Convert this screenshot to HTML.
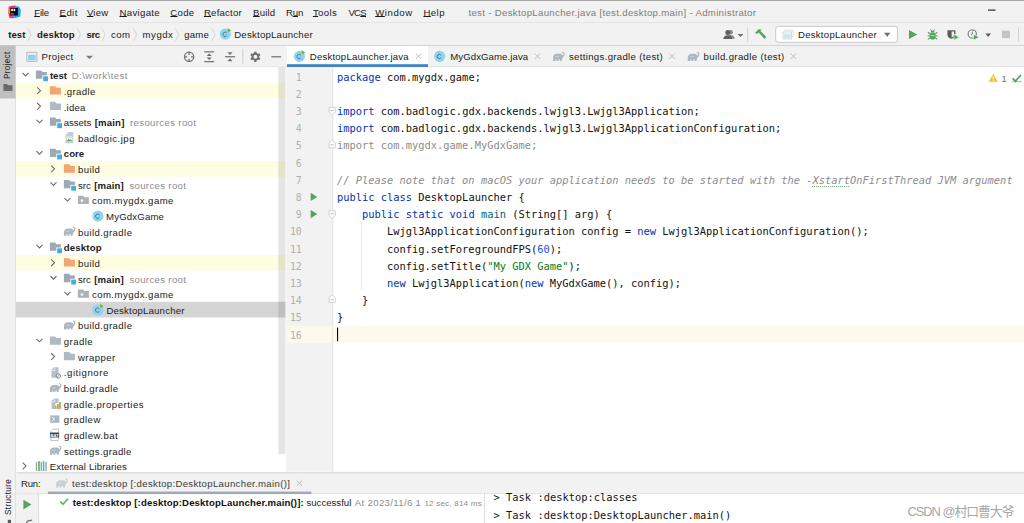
<!DOCTYPE html>
<html><head><meta charset="utf-8"><title>test - DesktopLauncher.java</title>
<style>
html,body{margin:0;padding:0;}
body{width:1024px;height:523px;position:relative;overflow:hidden;background:#f2f2f2;}
u{text-decoration-thickness:0.8px;text-underline-offset:0.2px}
svg{display:block;overflow:visible}
</style></head><body>
<svg width="1024" height="523" viewBox="0 0 1024 523" style="position:absolute;left:0;top:0">
<rect x="0" y="0" width="1024" height="523" fill="#f2f2f2" />
<rect x="0" y="0" width="1024" height="1" fill="#a8a8a8" />
<rect x="0" y="22" width="1024" height="1" fill="#e4e4e4" />
<rect x="0" y="45" width="1024" height="1" fill="#d4d4d4" />
<g transform="translate(7.9 5.3)"><path d="M0.8 1.2L7.2 0l1 6.5-6.6 6.2-1.2-4.5z" fill="#fb2e7e"/><path d="M0 4.8l3-1.8v6l-2.7-0.8z" fill="#fd8c28"/><path d="M7 0.5l4.2 1 1.7 3-0.6 6.7-5.5 1.7-2-4z" fill="#1ba5f6"/><path d="M1 12.4l4-2.4 1.6 2.6-3 0.3z" fill="#fb2e7e"/><rect x="2.4" y="2.6" width="7.6" height="7.6" fill="#0c0510"/><rect x="3.3" y="3.5" width="1.7" height="2.3" fill="#fff"/><rect x="5.6" y="3.5" width="1.7" height="2.3" fill="#fff"/><rect x="3.3" y="8.3" width="2.7" height="0.7" fill="#fff"/></g>
<rect x="988" y="9.5" width="7.5" height="1.2" fill="#2a2a2a" />
<g transform="translate(27.3 28.2)"><path d="M0.5 0.3l3.2 6.2-3.2 6.2" fill="none" stroke="#cdcdcd" stroke-width="0.8"/></g>
<g transform="translate(77 28.2)"><path d="M0.5 0.3l3.2 6.2-3.2 6.2" fill="none" stroke="#cdcdcd" stroke-width="0.8"/></g>
<g transform="translate(101.5 28.2)"><path d="M0.5 0.3l3.2 6.2-3.2 6.2" fill="none" stroke="#cdcdcd" stroke-width="0.8"/></g>
<g transform="translate(133 28.2)"><path d="M0.5 0.3l3.2 6.2-3.2 6.2" fill="none" stroke="#cdcdcd" stroke-width="0.8"/></g>
<g transform="translate(175 28.2)"><path d="M0.5 0.3l3.2 6.2-3.2 6.2" fill="none" stroke="#cdcdcd" stroke-width="0.8"/></g>
<g transform="translate(211.3 28.2)"><path d="M0.5 0.3l3.2 6.2-3.2 6.2" fill="none" stroke="#cdcdcd" stroke-width="0.8"/></g>
<g transform="translate(219.8 28.6)"><circle cx="5.55" cy="5.55" r="5.55" fill="#8fd3ef"/><path d="M6.95 4.45A2.15 2.15 0 1 0 6.95 6.95" fill="none" stroke="#4b7b93" stroke-width="1"/><path d="M7.7 -0.8l3.8 2.6-3.8 2.5z" fill="#5cb848" stroke="#fff" stroke-opacity="0.6" stroke-width="0.4"/></g>
<g transform="translate(723 29.5)"><circle cx="7.6" cy="2.8" r="2.3" fill="#8a8a8a"/><path d="M3.6 9.2c0-2.4 1.6-3.6 4-3.6s4 1.2 4 3.6z" fill="#8a8a8a"/><circle cx="4.8" cy="3" r="2.5" fill="#5f5f5f"/><path d="M0.4 9.6c0-2.6 1.8-3.8 4.4-3.8s4.4 1.2 4.4 3.8z" fill="#5f5f5f"/></g>
<g transform="translate(737.5 34)"><path d="M0 0h6l-3 3z" fill="#6e6e6e"/></g>
<rect x="747.2" y="27.5" width="1" height="14.5" fill="#d0d0d0" />
<g transform="translate(754 28.5)"><path d="M1 4.2L5 0.6l2.6 0.6-1.2 1.2 6 6.2-1.8 1.8-6-6.4-1.6 1.6z" fill="#56a35f"/></g>
<rect x="775.7" y="26.4" width="121.8" height="16" rx="2.5" fill="#fff" stroke="#c4c4c4" stroke-width="0.9"/>
<g transform="translate(782.5 29.5)"><rect x="2.6" y="0.5" width="8" height="6.4" fill="#fafbfc" stroke="#d5dbe0" stroke-width="0.8"/><rect x="0.5" y="2.4" width="8.6" height="7" fill="#f4f6f8" stroke="#cdd5db" stroke-width="0.8"/><rect x="1.6" y="4.6" width="6.4" height="3.8" fill="#c9e6f6"/></g>
<g transform="translate(884 32.8)"><path d="M0 0h6.4l-3.2 4z" fill="#6e6e6e"/></g>
<g transform="translate(909 29.9)"><path d="M0 0l8.2 4.6-8.2 4.6z" fill="#55a35f"/></g>
<g transform="translate(927.6 29)"><path d="M3 0.3l1.2 1.9M7 0.3L5.8 2.2" stroke="#55a35f" stroke-width="0.9" fill="none"/><path d="M2.9 3.4a2.1 2 0 0 1 4.2 0z" fill="#55a35f"/><rect x="2" y="3.6" width="6" height="6.9" rx="2.8" fill="#55a35f"/><path d="M0.3 3.2l2 1.5M9.7 3.2l-2 1.5M0 6.8h2.2M10 6.8H7.8M0.3 10.4l2-1.6M9.7 10.4l-2-1.6" stroke="#55a35f" stroke-width="1.1"/><path d="M3.3 6.6h3.4" stroke="#d8ead9" stroke-width="0.8"/></g>
<g transform="translate(947.2 29.9)"><path d="M0.2 0.3h8v4.5c0 2-1.5 3.3-4 4.1C1.7 8.1 0.2 6.8 0.2 4.8z" fill="#5c5c5c"/><path d="M4.4 1.5h2.5v3.2c0 1.2-0.9 2.2-2.5 2.9z" fill="#ececec"/><path d="M6.6 4.3l5.6 3-5.6 3z" fill="#55a35f" stroke="#f2f2f2" stroke-width="0.7"/></g>
<g transform="translate(967.6 29.3)"><circle cx="4.65" cy="4.7" r="4.1" fill="none" stroke="#6e6e6e" stroke-width="1"/><path d="M4.9 2.2l-0.4 2.8-1.2 1" fill="none" stroke="#6e6e6e" stroke-width="0.9"/><path d="M5.8 4.9l5.8 3-5.8 3z" fill="#55a35f" stroke="#f2f2f2" stroke-width="0.7"/></g>
<g transform="translate(985.4 33.6)"><path d="M0 0h5.6l-2.8 3.4z" fill="#5a5a5a"/></g>
<rect x="1002" y="30.7" width="8" height="7.4" fill="#c4c4c4" />
<rect x="1018" y="27.3" width="1" height="14" fill="#d0d0d0" />
<rect x="0" y="46" width="15.5" height="477" fill="#f2f2f2" />
<rect x="15.2" y="46" width="0.8" height="477" fill="#dcdcdc" />
<rect x="0" y="45.5" width="15.5" height="53" fill="#bfbfbf" />
<g transform="translate(3.4 84)"><path d="M0 0h3.6l1 1.2h4.4v5.8h-9z" fill="#6a6a6a"/></g>
<rect x="16.5" y="46" width="270" height="21" fill="#f2f2f2" />
<rect x="16.5" y="66.5" width="270" height="1" fill="#dddddd" />
<rect x="16" y="67.2" width="270.5" height="406" fill="#ffffff" />
<g transform="translate(26.4 51.8)"><rect x="0.5" y="0.5" width="10" height="9" fill="#eef1f3" stroke="#aab4bb" stroke-width="0.9"/><rect x="1.8" y="3" width="7.4" height="5.4" fill="#8fd0ee"/></g>
<g transform="translate(86 55.7)"><path d="M0 0h7l-3.5 3.4z" fill="#7a7a7a"/></g>
<g transform="translate(183.4 51.1)"><circle cx="5.7" cy="5.7" r="4.6" fill="none" stroke="#757575" stroke-width="1.3"/><path d="M5.7 0.6v3.2M5.7 7.6v3.2M0.6 5.7h3.2M7.6 5.7h3.2" stroke="#757575" stroke-width="1.3"/></g>
<g transform="translate(204.2 51.2)"><path d="M0 0.6h10M0 10.4h10" stroke="#757575" stroke-width="1.3"/><path d="M5 2.2l2.6 2.6h-5.2zM5 8.8l2.6-2.6h-5.2z" fill="#6e6e6e"/></g>
<g transform="translate(225 51.2)"><path d="M0 5.5h10" stroke="#757575" stroke-width="1.3"/><path d="M5 3.8l2.6-2.8h-5.2zM5 7.2l2.6 2.8h-5.2z" fill="#6e6e6e"/></g>
<rect x="242.3" y="48.8" width="1" height="14.8" fill="#d0d0d0" />
<g transform="translate(250.2 51.6)"><g transform="translate(5.2 5.2)"><g fill="#6e6e6e"><rect x="-1.1" y="-5.2" width="2.2" height="3" transform="rotate(0)"/><rect x="-1.1" y="-5.2" width="2.2" height="3" transform="rotate(60)"/><rect x="-1.1" y="-5.2" width="2.2" height="3" transform="rotate(120)"/><rect x="-1.1" y="-5.2" width="2.2" height="3" transform="rotate(180)"/><rect x="-1.1" y="-5.2" width="2.2" height="3" transform="rotate(240)"/><rect x="-1.1" y="-5.2" width="2.2" height="3" transform="rotate(300)"/></g><circle r="3" fill="none" stroke="#6e6e6e" stroke-width="1.9"/></g></g>
<rect x="271.3" y="56.2" width="9.8" height="1.2" fill="#6e6e6e" />
<rect x="16" y="82.84" width="269.5" height="15.64" fill="#fefde1" />
<rect x="16" y="161.04000000000002" width="269.5" height="15.64" fill="#fefde1" />
<rect x="16" y="254.88" width="269.5" height="15.64" fill="#fefde1" />
<rect x="16" y="301.8" width="269.5" height="15.64" fill="#d5d5d5" />
<rect x="278.3" y="67.2" width="7.2" height="387" fill="#000" fill-opacity="0.1"/>
<g transform="translate(21.5 71.72000000000001)"><path d="M1 1.2l3 3 3-3" fill="none" stroke="#6a6a6a" stroke-width="1.1"/></g>
<g transform="translate(35.9 70.52000000000001)"><path d="M0 0h5.2l1.5 1.6h4.3v6.7h-11z" fill="#9fa9b3"/><rect x="6.4" y="4.9" width="6" height="6" fill="#fff"/><rect x="7.3" y="5.8" width="4.8" height="4.9" fill="#3fb0e2"/></g>
<g transform="translate(36.0 86.66)"><path d="M1.2 0.7l3.3 3.3-3.3 3.3" fill="none" stroke="#6a6a6a" stroke-width="1.1"/></g>
<g transform="translate(49.9 86.16)"><path d="M0 0h5.2l1.5 1.6h4.3v6.7h-11z" fill="#f3a673"/></g>
<g transform="translate(36.0 102.30000000000001)"><path d="M1.2 0.7l3.3 3.3-3.3 3.3" fill="none" stroke="#6a6a6a" stroke-width="1.1"/></g>
<g transform="translate(49.9 101.80000000000001)"><path d="M0 0h5.2l1.5 1.6h4.3v6.7h-11z" fill="#b0bac2"/></g>
<g transform="translate(35.5 118.64)"><path d="M1 1.2l3 3 3-3" fill="none" stroke="#6a6a6a" stroke-width="1.1"/></g>
<g transform="translate(49.9 117.44)"><path d="M0 0h5.2l1.5 1.6h4.3v6.7h-11z" fill="#9fa9b3"/><rect x="6.4" y="4.9" width="6" height="6" fill="#fff"/><rect x="7.3" y="5.8" width="4.8" height="4.9" fill="#3fb0e2"/></g>
<g transform="translate(65.5 131.98)"><path d="M2.6 0h5.2v11.2h-7.8V2.6z" fill="#c5cdd3"/><path d="M0 2.6L2.6 0v2.6z" fill="#e3e7ea"/><rect x="1.2" y="4.2" width="5.4" height="4.8" fill="#fff"/><path d="M1.2 9l1.9-2.6 1.4 1.5 0.9-0.8 1.2 1.9z" fill="#62b543"/><rect x="1.2" y="4.2" width="5.4" height="1.6" fill="#bfe0f3"/></g>
<g transform="translate(35.5 149.92)"><path d="M1 1.2l3 3 3-3" fill="none" stroke="#6a6a6a" stroke-width="1.1"/></g>
<g transform="translate(49.9 148.72)"><path d="M0 0h5.2l1.5 1.6h4.3v6.7h-11z" fill="#9fa9b3"/><rect x="6.4" y="4.9" width="6" height="6" fill="#fff"/><rect x="7.3" y="5.8" width="4.8" height="4.9" fill="#3fb0e2"/></g>
<g transform="translate(50.0 164.86)"><path d="M1.2 0.7l3.3 3.3-3.3 3.3" fill="none" stroke="#6a6a6a" stroke-width="1.1"/></g>
<g transform="translate(63.9 164.36)"><path d="M0 0h5.2l1.5 1.6h4.3v6.7h-11z" fill="#f3a673"/></g>
<g transform="translate(49.5 181.2)"><path d="M1 1.2l3 3 3-3" fill="none" stroke="#6a6a6a" stroke-width="1.1"/></g>
<g transform="translate(63.9 180.0)"><path d="M0 0h5.2l1.5 1.6h4.3v6.7h-11z" fill="#9fa9b3"/><rect x="6.4" y="4.9" width="6" height="6" fill="#fff"/><rect x="7.3" y="5.8" width="4.8" height="4.9" fill="#3fb0e2"/></g>
<g transform="translate(63.5 196.83999999999997)"><path d="M1 1.2l3 3 3-3" fill="none" stroke="#6a6a6a" stroke-width="1.1"/></g>
<g transform="translate(77.89999999999999 195.64)"><path d="M0 0h5.2l1.5 1.6h4.3v6.7h-11z" fill="#a9b3bc"/><circle cx="4.1" cy="5" r="1.35" fill="#f3f5f6"/></g>
<g transform="translate(92.39999999999999 210.57999999999998)"><circle cx="5.55" cy="5.55" r="5.55" fill="#8fd3ef"/><path d="M6.95 4.45A2.15 2.15 0 1 0 6.95 6.95" fill="none" stroke="#4b7b93" stroke-width="1"/></g>
<g transform="translate(63.699999999999996 226.72000000000003)"><path d="M0.2 9V5.6C0.2 3.2 2 1.8 4.4 1.8H7C8.4 1.8 9.2 2.6 9.6 3.6C10.2 3.4 10.6 2.8 10.6 2C10.6 1.2 10 0.9 9.4 1.1L9 0.3C10.4-0.3 11.8 0.5 11.8 2C11.8 3.8 10.8 5 9.8 5.4V6C9.8 6.6 9.5 7 9 7.2V9H7V7.6H5.6V9H3.6V7.6H2.6V9Z" fill="#acb7c0"/><path d="M2.6 4.4c1 0.8 2.4 0.8 3.4 0" fill="none" stroke="#dfe4e8" stroke-width="0.6"/></g>
<g transform="translate(35.5 243.76)"><path d="M1 1.2l3 3 3-3" fill="none" stroke="#6a6a6a" stroke-width="1.1"/></g>
<g transform="translate(49.9 242.56)"><path d="M0 0h5.2l1.5 1.6h4.3v6.7h-11z" fill="#9fa9b3"/><rect x="6.4" y="4.9" width="6" height="6" fill="#fff"/><rect x="7.3" y="5.8" width="4.8" height="4.9" fill="#3fb0e2"/></g>
<g transform="translate(50.0 258.7)"><path d="M1.2 0.7l3.3 3.3-3.3 3.3" fill="none" stroke="#6a6a6a" stroke-width="1.1"/></g>
<g transform="translate(63.9 258.2)"><path d="M0 0h5.2l1.5 1.6h4.3v6.7h-11z" fill="#f3a673"/></g>
<g transform="translate(49.5 275.03999999999996)"><path d="M1 1.2l3 3 3-3" fill="none" stroke="#6a6a6a" stroke-width="1.1"/></g>
<g transform="translate(63.9 273.84)"><path d="M0 0h5.2l1.5 1.6h4.3v6.7h-11z" fill="#9fa9b3"/><rect x="6.4" y="4.9" width="6" height="6" fill="#fff"/><rect x="7.3" y="5.8" width="4.8" height="4.9" fill="#3fb0e2"/></g>
<g transform="translate(63.5 290.68)"><path d="M1 1.2l3 3 3-3" fill="none" stroke="#6a6a6a" stroke-width="1.1"/></g>
<g transform="translate(77.89999999999999 289.48)"><path d="M0 0h5.2l1.5 1.6h4.3v6.7h-11z" fill="#a9b3bc"/><circle cx="4.1" cy="5" r="1.35" fill="#f3f5f6"/></g>
<g transform="translate(92.39999999999999 304.42)"><circle cx="5.55" cy="5.55" r="5.55" fill="#8fd3ef"/><path d="M6.95 4.45A2.15 2.15 0 1 0 6.95 6.95" fill="none" stroke="#4b7b93" stroke-width="1"/><path d="M7.7 -0.8l3.8 2.6-3.8 2.5z" fill="#5cb848" stroke="#fff" stroke-opacity="0.6" stroke-width="0.4"/></g>
<g transform="translate(63.699999999999996 320.56)"><path d="M0.2 9V5.6C0.2 3.2 2 1.8 4.4 1.8H7C8.4 1.8 9.2 2.6 9.6 3.6C10.2 3.4 10.6 2.8 10.6 2C10.6 1.2 10 0.9 9.4 1.1L9 0.3C10.4-0.3 11.8 0.5 11.8 2C11.8 3.8 10.8 5 9.8 5.4V6C9.8 6.6 9.5 7 9 7.2V9H7V7.6H5.6V9H3.6V7.6H2.6V9Z" fill="#acb7c0"/><path d="M2.6 4.4c1 0.8 2.4 0.8 3.4 0" fill="none" stroke="#dfe4e8" stroke-width="0.6"/></g>
<g transform="translate(35.5 337.59999999999997)"><path d="M1 1.2l3 3 3-3" fill="none" stroke="#6a6a6a" stroke-width="1.1"/></g>
<g transform="translate(49.9 336.4)"><path d="M0 0h5.2l1.5 1.6h4.3v6.7h-11z" fill="#b0bac2"/></g>
<g transform="translate(50.0 352.53999999999996)"><path d="M1.2 0.7l3.3 3.3-3.3 3.3" fill="none" stroke="#6a6a6a" stroke-width="1.1"/></g>
<g transform="translate(63.9 352.03999999999996)"><path d="M0 0h5.2l1.5 1.6h4.3v6.7h-11z" fill="#b0bac2"/></g>
<g transform="translate(51.5 367.18)"><path d="M2.6 0h4.4v10.5h-7V2.6z" fill="#b5bfc6"/><path d="M3.3 0.6v2.7h-2.7" fill="none" stroke="#fff" stroke-width="0.7"/><circle cx="6.8" cy="8.8" r="2.2" fill="#fff" stroke="#6a6a6a" stroke-width="0.8"/><path d="M5.5 10.2l2.7-2.8" stroke="#6a6a6a" stroke-width="0.7"/></g>
<g transform="translate(49.699999999999996 383.12)"><path d="M0.2 9V5.6C0.2 3.2 2 1.8 4.4 1.8H7C8.4 1.8 9.2 2.6 9.6 3.6C10.2 3.4 10.6 2.8 10.6 2C10.6 1.2 10 0.9 9.4 1.1L9 0.3C10.4-0.3 11.8 0.5 11.8 2C11.8 3.8 10.8 5 9.8 5.4V6C9.8 6.6 9.5 7 9 7.2V9H7V7.6H5.6V9H3.6V7.6H2.6V9Z" fill="#acb7c0"/><path d="M2.6 4.4c1 0.8 2.4 0.8 3.4 0" fill="none" stroke="#dfe4e8" stroke-width="0.6"/></g>
<g transform="translate(51.5 398.46)"><path d="M2.6 0h4.4v4.6h-3v5.9h-4V2.6z" fill="#b5bfc6"/><path d="M3.3 0.6v2.7h-2.7" fill="none" stroke="#fff" stroke-width="0.7"/><rect x="3.6" y="7.2" width="1.5" height="3.3" fill="#f29b3a"/><rect x="5.6" y="5.6" width="1.5" height="4.9" fill="#f2762e"/><rect x="7.7" y="3.6" width="1.5" height="6.9" fill="#62b543"/></g>
<g transform="translate(50.199999999999996 415.40000000000003)"><rect width="9.2" height="7.4" fill="#aeb8c0"/><path d="M2 1.8l2.2 1.9-2.2 1.9" fill="none" stroke="#fff" stroke-width="1"/></g>
<g transform="translate(50.1 428.74)"><path d="M3 0.4h5.3v11.4h-7.5V2.6z" fill="#fff" stroke="#aeb8c0" stroke-width="0.8"/><rect x="0" y="3.8" width="9" height="4.9" fill="#3c4347"/><text x="0.5" y="7.9" font-family="Liberation Sans, sans-serif" font-size="4.3" font-weight="bold" fill="#fff" textLength="8" lengthAdjust="spacingAndGlyphs">BAT</text></g>
<g transform="translate(49.699999999999996 445.68)"><path d="M0.2 9V5.6C0.2 3.2 2 1.8 4.4 1.8H7C8.4 1.8 9.2 2.6 9.6 3.6C10.2 3.4 10.6 2.8 10.6 2C10.6 1.2 10 0.9 9.4 1.1L9 0.3C10.4-0.3 11.8 0.5 11.8 2C11.8 3.8 10.8 5 9.8 5.4V6C9.8 6.6 9.5 7 9 7.2V9H7V7.6H5.6V9H3.6V7.6H2.6V9Z" fill="#acb7c0"/><path d="M2.6 4.4c1 0.8 2.4 0.8 3.4 0" fill="none" stroke="#dfe4e8" stroke-width="0.6"/></g>
<g transform="translate(21.5 462.02)"><path d="M1.2 0.7l3.3 3.3-3.3 3.3" fill="none" stroke="#6a6a6a" stroke-width="1.1"/></g>
<g transform="translate(35.800000000000004 461.02)"><rect x="0" y="1" width="1.4" height="9" fill="#9aa7b0"/><rect x="2.4" y="0" width="1.6" height="10" fill="#62b543"/><rect x="4.8" y="1" width="1.4" height="9" fill="#9aa7b0"/><rect x="7" y="0" width="1.6" height="10" fill="#40b6e0"/><rect x="9.6" y="1" width="1.4" height="9" fill="#9aa7b0"/></g>
<rect x="286.5" y="46" width="738" height="21" fill="#f2f2f2" />
<rect x="286.5" y="66.5" width="738" height="0.8" fill="#d4d4d4" />
<rect x="287" y="46" width="141" height="19" fill="#ffffff" />
<rect x="287" y="64.2" width="141" height="2.9" fill="#4083c9" />
<rect x="287" y="67.2" width="737.5" height="404.5" fill="#ffffff" />
<rect x="286.6" y="67.2" width="45.9" height="404.5" fill="#f2f2f2" />
<rect x="332.4" y="67.2" width="0.8" height="404.5" fill="#dcdcdc" />
<g transform="translate(293.9 50.8)"><circle cx="5.55" cy="5.55" r="5.55" fill="#8fd3ef"/><path d="M6.95 4.45A2.15 2.15 0 1 0 6.95 6.95" fill="none" stroke="#4b7b93" stroke-width="1"/><path d="M7.7 -0.8l3.8 2.6-3.8 2.5z" fill="#5cb848" stroke="#fff" stroke-opacity="0.6" stroke-width="0.4"/></g>
<g transform="translate(415.1 52.8)"><path d="M0.8 0.8l5.4 5.4M6.2 0.8L0.8 6.2" stroke="#b4b4b4" stroke-width="0.9"/></g>
<g transform="translate(434.1 50.8)"><circle cx="5.55" cy="5.55" r="5.55" fill="#8fd3ef"/><path d="M6.95 4.45A2.15 2.15 0 1 0 6.95 6.95" fill="none" stroke="#4b7b93" stroke-width="1"/></g>
<g transform="translate(534.0 52.8)"><path d="M0.8 0.8l5.4 5.4M6.2 0.8L0.8 6.2" stroke="#b4b4b4" stroke-width="0.9"/></g>
<g transform="translate(552.8 51.9)"><path d="M0.2 9V5.6C0.2 3.2 2 1.8 4.4 1.8H7C8.4 1.8 9.2 2.6 9.6 3.6C10.2 3.4 10.6 2.8 10.6 2C10.6 1.2 10 0.9 9.4 1.1L9 0.3C10.4-0.3 11.8 0.5 11.8 2C11.8 3.8 10.8 5 9.8 5.4V6C9.8 6.6 9.5 7 9 7.2V9H7V7.6H5.6V9H3.6V7.6H2.6V9Z" fill="#acb7c0"/><path d="M2.6 4.4c1 0.8 2.4 0.8 3.4 0" fill="none" stroke="#dfe4e8" stroke-width="0.6"/></g>
<g transform="translate(668.5 52.8)"><path d="M0.8 0.8l5.4 5.4M6.2 0.8L0.8 6.2" stroke="#b4b4b4" stroke-width="0.9"/></g>
<g transform="translate(687.6 51.9)"><path d="M0.2 9V5.6C0.2 3.2 2 1.8 4.4 1.8H7C8.4 1.8 9.2 2.6 9.6 3.6C10.2 3.4 10.6 2.8 10.6 2C10.6 1.2 10 0.9 9.4 1.1L9 0.3C10.4-0.3 11.8 0.5 11.8 2C11.8 3.8 10.8 5 9.8 5.4V6C9.8 6.6 9.5 7 9 7.2V9H7V7.6H5.6V9H3.6V7.6H2.6V9Z" fill="#acb7c0"/><path d="M2.6 4.4c1 0.8 2.4 0.8 3.4 0" fill="none" stroke="#dfe4e8" stroke-width="0.6"/></g>
<g transform="translate(789.9 52.8)"><path d="M0.8 0.8l5.4 5.4M6.2 0.8L0.8 6.2" stroke="#b4b4b4" stroke-width="0.9"/></g>
<rect x="287" y="325.8" width="737.5" height="16.9" fill="#fcfaed" />
<rect x="332.4" y="325.8" width="0.8" height="16.9" fill="#e6e3d3" />
<rect x="337" y="327.6" width="1.1" height="13.6" fill="#000" />
<g transform="translate(310.7 192.8)"><path d="M0 0l6.6 4.1-6.6 4.1z" fill="#55a35f"/></g>
<g transform="translate(310.7 210.0)"><path d="M0 0l6.6 4.1-6.6 4.1z" fill="#55a35f"/></g>
<g transform="translate(328.7 107.1)"><path d="M0.4 0.4h6.2v5l-3.1 2.8-3.1-2.8z" fill="#fff" stroke="#c8c8c8" stroke-width="0.8"/><path d="M2 3.4h3" stroke="#a0a0a0" stroke-width="0.8"/></g>
<g transform="translate(328.7 139.7)"><path d="M0.4 8.2h6.2v-5l-3.1-2.8-3.1 2.8z" fill="#fff" stroke="#c8c8c8" stroke-width="0.8"/><path d="M2 5.2h3" stroke="#a0a0a0" stroke-width="0.8"/></g>
<g transform="translate(328.7 210.29999999999998)"><path d="M0.4 0.4h6.2v5l-3.1 2.8-3.1-2.8z" fill="#fff" stroke="#c8c8c8" stroke-width="0.8"/><path d="M2 3.4h3" stroke="#a0a0a0" stroke-width="0.8"/></g>
<g transform="translate(328.7 294.5)"><path d="M0.4 8.2h6.2v-5l-3.1-2.8-3.1 2.8z" fill="#fff" stroke="#c8c8c8" stroke-width="0.8"/><path d="M2 5.2h3" stroke="#a0a0a0" stroke-width="0.8"/></g>
<rect x="361.3" y="222.5" width="0.8" height="68" fill="#e2e2e2" />
<g transform="translate(988.6 74)"><path d="M4.6 0l4.6 7.8h-9.2z" fill="#f2bf2f"/><path d="M4.6 2.6v2.8M4.6 6v0.9" stroke="#fff" stroke-width="1"/></g>
<g transform="translate(1011.6 74.2)"><path d="M1 4.2l2.8 2.6 5.6-6" fill="none" stroke="#4f9d55" stroke-width="1.6"/><path d="M0.6 8l1.6-1 1.6 1 1.6-1 1.6 1 1.6-1 1.6 1" fill="none" stroke="#4f9d55" stroke-width="0.7"/></g>
<rect x="16.5" y="471.8" width="1008" height="52" fill="#f2f2f2" />
<rect x="16.5" y="472.3" width="1008" height="1" fill="#d4d4d4" />
<rect x="16.5" y="493.4" width="1008" height="0.8" fill="#dedede" />
<g transform="translate(56 478.4)"><path d="M0.2 9V5.6C0.2 3.2 2 1.8 4.4 1.8H7C8.4 1.8 9.2 2.6 9.6 3.6C10.2 3.4 10.6 2.8 10.6 2C10.6 1.2 10 0.9 9.4 1.1L9 0.3C10.4-0.3 11.8 0.5 11.8 2C11.8 3.8 10.8 5 9.8 5.4V6C9.8 6.6 9.5 7 9 7.2V9H7V7.6H5.6V9H3.6V7.6H2.6V9Z" fill="#c8cfd4"/><path d="M2.6 4.4c1 0.8 2.4 0.8 3.4 0" fill="none" stroke="#dfe4e8" stroke-width="0.6"/></g>
<g transform="translate(295.9 479.7)"><path d="M0.8 0.8l5.4 5.4M6.2 0.8L0.8 6.2" stroke="#b4b4b4" stroke-width="0.9"/></g>
<rect x="47.9" y="491.6" width="263.4" height="2.5" fill="#9da9ba" />
<rect x="39" y="494.2" width="445.3" height="30" fill="#ffffff" />
<rect x="38.3" y="493.5" width="0.8" height="30" fill="#d4d4d4" />
<rect x="484.3" y="493.5" width="0.8" height="30" fill="#d4d4d4" />
<rect x="485.1" y="494.2" width="539" height="30" fill="#ffffff" />
<g transform="translate(23.4 499.8)"><path d="M0 0l8 4.8-8 4.8z" fill="#55a35f"/></g>
<g transform="translate(25.5 519.5)"><path d="M1 4C1 1.6 3 0.6 5 1.2l1.6-1" fill="none" stroke="#757575" stroke-width="1.3"/></g>
<g transform="translate(59.4 498)"><path d="M0.9 3.7l2.6 2.6 5-5.4" fill="none" stroke="#62b866" stroke-width="1.8"/></g>
<rect x="7.8" y="519.8" width="3.2" height="3.2" fill="#5a5a5a" />
</svg>
<div style="position:absolute;left:2.90px;top:515.20px;width:0;height:0;"><div style="position:absolute;left:0;top:0;transform-origin:0 0;transform:rotate(-90deg);font-family:'Liberation Sans', 'Noto Sans CJK SC', sans-serif;font-size:8.2px;color:#1a1a1a;white-space:pre;line-height:12px;letter-spacing:0.331px">Structure</div></div>
<div style="position:absolute;left:2.20px;top:78.70px;width:0;height:0;"><div style="position:absolute;left:0;top:0;transform-origin:0 0;transform:rotate(-90deg);font-family:'Liberation Sans', 'Noto Sans CJK SC', sans-serif;font-size:8.2px;color:#1a1a1a;white-space:pre;line-height:12px;letter-spacing:0.288px">Project</div></div>
<div style="position:absolute;left:34.20px;top:6.70px;line-height:11px;white-space:pre;color:#1a1a1a;font-family:'Liberation Sans', 'Noto Sans CJK SC', sans-serif;font-size:9.6px;letter-spacing:-0.167px;"><u>F</u>ile</div>
<div style="position:absolute;left:59.60px;top:6.70px;line-height:11px;white-space:pre;color:#1a1a1a;font-family:'Liberation Sans', 'Noto Sans CJK SC', sans-serif;font-size:9.6px;letter-spacing:0.388px;"><u>E</u>dit</div>
<div style="position:absolute;left:86.90px;top:6.70px;line-height:11px;white-space:pre;color:#1a1a1a;font-family:'Liberation Sans', 'Noto Sans CJK SC', sans-serif;font-size:9.6px;letter-spacing:0.219px;"><u>V</u>iew</div>
<div style="position:absolute;left:119.50px;top:6.70px;line-height:11px;white-space:pre;color:#1a1a1a;font-family:'Liberation Sans', 'Noto Sans CJK SC', sans-serif;font-size:9.6px;letter-spacing:0.328px;"><u>N</u>avigate</div>
<div style="position:absolute;left:170.30px;top:6.70px;line-height:11px;white-space:pre;color:#1a1a1a;font-family:'Liberation Sans', 'Noto Sans CJK SC', sans-serif;font-size:9.6px;letter-spacing:0.316px;"><u>C</u>ode</div>
<div style="position:absolute;left:203.90px;top:6.70px;line-height:11px;white-space:pre;color:#1a1a1a;font-family:'Liberation Sans', 'Noto Sans CJK SC', sans-serif;font-size:9.6px;letter-spacing:0.229px;"><u>R</u>efactor</div>
<div style="position:absolute;left:253.10px;top:6.70px;line-height:11px;white-space:pre;color:#1a1a1a;font-family:'Liberation Sans', 'Noto Sans CJK SC', sans-serif;font-size:9.6px;letter-spacing:0.151px;"><u>B</u>uild</div>
<div style="position:absolute;left:286.00px;top:6.70px;line-height:11px;white-space:pre;color:#1a1a1a;font-family:'Liberation Sans', 'Noto Sans CJK SC', sans-serif;font-size:9.6px;letter-spacing:-0.203px;">R<u>u</u>n</div>
<div style="position:absolute;left:312.90px;top:6.70px;line-height:11px;white-space:pre;color:#1a1a1a;font-family:'Liberation Sans', 'Noto Sans CJK SC', sans-serif;font-size:9.6px;letter-spacing:0.399px;"><u>T</u>ools</div>
<div style="position:absolute;left:348.40px;top:6.70px;line-height:11px;white-space:pre;color:#1a1a1a;font-family:'Liberation Sans', 'Noto Sans CJK SC', sans-serif;font-size:9.6px;letter-spacing:-0.711px;">VC<u>S</u></div>
<div style="position:absolute;left:375.20px;top:6.70px;line-height:11px;white-space:pre;color:#1a1a1a;font-family:'Liberation Sans', 'Noto Sans CJK SC', sans-serif;font-size:9.6px;letter-spacing:0.562px;"><u>W</u>indow</div>
<div style="position:absolute;left:423.40px;top:6.70px;line-height:11px;white-space:pre;color:#1a1a1a;font-family:'Liberation Sans', 'Noto Sans CJK SC', sans-serif;font-size:9.6px;letter-spacing:0.466px;"><u>H</u>elp</div>
<div style="position:absolute;left:468.40px;top:6.70px;line-height:11px;white-space:pre;color:#7c7c7c;font-family:'Liberation Sans', 'Noto Sans CJK SC', sans-serif;font-size:9.6px;letter-spacing:0.338px;">test - DesktopLauncher.java [test.desktop.main] - Administrator</div>
<div style="position:absolute;left:8.20px;top:28.80px;line-height:11px;white-space:pre;color:#1a1a1a;font-family:'Liberation Sans', 'Noto Sans CJK SC', sans-serif;font-size:9.6px;font-weight:bold;letter-spacing:0.034px;">test</div>
<div style="position:absolute;left:37.10px;top:28.80px;line-height:11px;white-space:pre;color:#1a1a1a;font-family:'Liberation Sans', 'Noto Sans CJK SC', sans-serif;font-size:9.6px;font-weight:bold;letter-spacing:0.129px;">desktop</div>
<div style="position:absolute;left:86.50px;top:28.80px;line-height:11px;white-space:pre;color:#1a1a1a;font-family:'Liberation Sans', 'Noto Sans CJK SC', sans-serif;font-size:9.6px;font-weight:bold;letter-spacing:-0.435px;">src</div>
<div style="position:absolute;left:111.00px;top:28.80px;line-height:11px;white-space:pre;color:#1a1a1a;font-family:'Liberation Sans', 'Noto Sans CJK SC', sans-serif;font-size:9.6px;letter-spacing:0.458px;">com</div>
<div style="position:absolute;left:142.60px;top:28.80px;line-height:11px;white-space:pre;color:#1a1a1a;font-family:'Liberation Sans', 'Noto Sans CJK SC', sans-serif;font-size:9.6px;letter-spacing:0.507px;">mygdx</div>
<div style="position:absolute;left:184.20px;top:28.80px;line-height:11px;white-space:pre;color:#1a1a1a;font-family:'Liberation Sans', 'Noto Sans CJK SC', sans-serif;font-size:9.6px;letter-spacing:0.250px;">game</div>
<div style="position:absolute;left:234.20px;top:28.80px;line-height:11px;white-space:pre;color:#1a1a1a;font-family:'Liberation Sans', 'Noto Sans CJK SC', sans-serif;font-size:9.6px;letter-spacing:0.233px;">DesktopLauncher</div>
<div style="position:absolute;left:798.00px;top:28.80px;line-height:11px;white-space:pre;color:#1a1a1a;font-family:'Liberation Sans', 'Noto Sans CJK SC', sans-serif;font-size:9.6px;letter-spacing:0.253px;">DesktopLauncher</div>
<div style="position:absolute;left:41.60px;top:51.30px;line-height:11px;white-space:pre;color:#1a1a1a;font-family:'Liberation Sans', 'Noto Sans CJK SC', sans-serif;font-size:9.6px;letter-spacing:0.306px;">Project</div>
<div style="position:absolute;left:49.90px;top:70.22px;line-height:11px;white-space:pre;color:#1a1a1a;font-family:'Liberation Sans', 'Noto Sans CJK SC', sans-serif;font-size:9.6px;font-weight:bold;letter-spacing:-0.003px;">test</div>
<div style="position:absolute;left:71.70px;top:70.22px;line-height:11px;white-space:pre;color:#8c8c8c;font-family:'Liberation Sans', 'Noto Sans CJK SC', sans-serif;font-size:9.6px;letter-spacing:0.470px;">D:\work\test</div>
<div style="position:absolute;left:63.80px;top:85.86px;line-height:11px;white-space:pre;color:#1a1a1a;font-family:'Liberation Sans', 'Noto Sans CJK SC', sans-serif;font-size:9.6px;letter-spacing:0.351px;">.gradle</div>
<div style="position:absolute;left:63.80px;top:101.50px;line-height:11px;white-space:pre;color:#1a1a1a;font-family:'Liberation Sans', 'Noto Sans CJK SC', sans-serif;font-size:9.6px;letter-spacing:0.158px;">.idea</div>
<div style="position:absolute;left:63.80px;top:117.14px;line-height:11px;white-space:pre;color:#1a1a1a;font-family:'Liberation Sans', 'Noto Sans CJK SC', sans-serif;font-size:9.6px;letter-spacing:-0.056px;">assets</div>
<div style="position:absolute;left:94.75px;top:117.14px;line-height:11px;white-space:pre;color:#1a1a1a;font-family:'Liberation Sans', 'Noto Sans CJK SC', sans-serif;font-size:9.6px;font-weight:bold;letter-spacing:0.161px;">[main]</div>
<div style="position:absolute;left:130.00px;top:117.14px;line-height:11px;white-space:pre;color:#8c8c8c;font-family:'Liberation Sans', 'Noto Sans CJK SC', sans-serif;font-size:9.6px;letter-spacing:0.355px;">resources root</div>
<div style="position:absolute;left:77.90px;top:132.78px;line-height:11px;white-space:pre;color:#1a1a1a;font-family:'Liberation Sans', 'Noto Sans CJK SC', sans-serif;font-size:9.6px;letter-spacing:0.490px;">badlogic.jpg</div>
<div style="position:absolute;left:63.80px;top:148.42px;line-height:11px;white-space:pre;color:#1a1a1a;font-family:'Liberation Sans', 'Noto Sans CJK SC', sans-serif;font-size:9.6px;font-weight:bold;letter-spacing:0.034px;">core</div>
<div style="position:absolute;left:77.90px;top:164.06px;line-height:11px;white-space:pre;color:#1a1a1a;font-family:'Liberation Sans', 'Noto Sans CJK SC', sans-serif;font-size:9.6px;letter-spacing:0.444px;">build</div>
<div style="position:absolute;left:77.90px;top:179.70px;line-height:11px;white-space:pre;color:#1a1a1a;font-family:'Liberation Sans', 'Noto Sans CJK SC', sans-serif;font-size:9.6px;letter-spacing:0.001px;">src</div>
<div style="position:absolute;left:94.20px;top:179.70px;line-height:11px;white-space:pre;color:#1a1a1a;font-family:'Liberation Sans', 'Noto Sans CJK SC', sans-serif;font-size:9.6px;font-weight:bold;letter-spacing:0.136px;">[main]</div>
<div style="position:absolute;left:129.40px;top:179.70px;line-height:11px;white-space:pre;color:#8c8c8c;font-family:'Liberation Sans', 'Noto Sans CJK SC', sans-serif;font-size:9.6px;letter-spacing:0.338px;">sources root</div>
<div style="position:absolute;left:91.90px;top:195.34px;line-height:11px;white-space:pre;color:#1a1a1a;font-family:'Liberation Sans', 'Noto Sans CJK SC', sans-serif;font-size:9.6px;letter-spacing:0.449px;">com.mygdx.game</div>
<div style="position:absolute;left:106.00px;top:210.98px;line-height:11px;white-space:pre;color:#1a1a1a;font-family:'Liberation Sans', 'Noto Sans CJK SC', sans-serif;font-size:9.6px;letter-spacing:0.176px;">MyGdxGame</div>
<div style="position:absolute;left:77.90px;top:226.62px;line-height:11px;white-space:pre;color:#1a1a1a;font-family:'Liberation Sans', 'Noto Sans CJK SC', sans-serif;font-size:9.6px;letter-spacing:0.408px;">build.gradle</div>
<div style="position:absolute;left:63.80px;top:242.26px;line-height:11px;white-space:pre;color:#1a1a1a;font-family:'Liberation Sans', 'Noto Sans CJK SC', sans-serif;font-size:9.6px;font-weight:bold;letter-spacing:0.172px;">desktop</div>
<div style="position:absolute;left:77.90px;top:257.90px;line-height:11px;white-space:pre;color:#1a1a1a;font-family:'Liberation Sans', 'Noto Sans CJK SC', sans-serif;font-size:9.6px;letter-spacing:0.444px;">build</div>
<div style="position:absolute;left:77.90px;top:273.54px;line-height:11px;white-space:pre;color:#1a1a1a;font-family:'Liberation Sans', 'Noto Sans CJK SC', sans-serif;font-size:9.6px;letter-spacing:0.001px;">src</div>
<div style="position:absolute;left:94.20px;top:273.54px;line-height:11px;white-space:pre;color:#1a1a1a;font-family:'Liberation Sans', 'Noto Sans CJK SC', sans-serif;font-size:9.6px;font-weight:bold;letter-spacing:0.136px;">[main]</div>
<div style="position:absolute;left:129.40px;top:273.54px;line-height:11px;white-space:pre;color:#8c8c8c;font-family:'Liberation Sans', 'Noto Sans CJK SC', sans-serif;font-size:9.6px;letter-spacing:0.338px;">sources root</div>
<div style="position:absolute;left:91.90px;top:289.18px;line-height:11px;white-space:pre;color:#1a1a1a;font-family:'Liberation Sans', 'Noto Sans CJK SC', sans-serif;font-size:9.6px;letter-spacing:0.449px;">com.mygdx.game</div>
<div style="position:absolute;left:106.40px;top:304.82px;line-height:11px;white-space:pre;color:#1a1a1a;font-family:'Liberation Sans', 'Noto Sans CJK SC', sans-serif;font-size:9.6px;letter-spacing:0.203px;">DesktopLauncher</div>
<div style="position:absolute;left:77.90px;top:320.46px;line-height:11px;white-space:pre;color:#1a1a1a;font-family:'Liberation Sans', 'Noto Sans CJK SC', sans-serif;font-size:9.6px;letter-spacing:0.408px;">build.gradle</div>
<div style="position:absolute;left:63.80px;top:336.10px;line-height:11px;white-space:pre;color:#1a1a1a;font-family:'Liberation Sans', 'Noto Sans CJK SC', sans-serif;font-size:9.6px;letter-spacing:0.421px;">gradle</div>
<div style="position:absolute;left:77.90px;top:351.74px;line-height:11px;white-space:pre;color:#1a1a1a;font-family:'Liberation Sans', 'Noto Sans CJK SC', sans-serif;font-size:9.6px;letter-spacing:0.447px;">wrapper</div>
<div style="position:absolute;left:63.80px;top:367.38px;line-height:11px;white-space:pre;color:#1a1a1a;font-family:'Liberation Sans', 'Noto Sans CJK SC', sans-serif;font-size:9.6px;letter-spacing:0.553px;">.gitignore</div>
<div style="position:absolute;left:63.80px;top:383.02px;line-height:11px;white-space:pre;color:#1a1a1a;font-family:'Liberation Sans', 'Noto Sans CJK SC', sans-serif;font-size:9.6px;letter-spacing:0.424px;">build.gradle</div>
<div style="position:absolute;left:63.80px;top:398.66px;line-height:11px;white-space:pre;color:#1a1a1a;font-family:'Liberation Sans', 'Noto Sans CJK SC', sans-serif;font-size:9.6px;letter-spacing:0.482px;">gradle.properties</div>
<div style="position:absolute;left:63.80px;top:414.30px;line-height:11px;white-space:pre;color:#1a1a1a;font-family:'Liberation Sans', 'Noto Sans CJK SC', sans-serif;font-size:9.6px;letter-spacing:0.499px;">gradlew</div>
<div style="position:absolute;left:64.00px;top:429.94px;line-height:11px;white-space:pre;color:#1a1a1a;font-family:'Liberation Sans', 'Noto Sans CJK SC', sans-serif;font-size:9.6px;letter-spacing:0.466px;">gradlew.bat</div>
<div style="position:absolute;left:64.00px;top:445.58px;line-height:11px;white-space:pre;color:#1a1a1a;font-family:'Liberation Sans', 'Noto Sans CJK SC', sans-serif;font-size:9.6px;letter-spacing:0.360px;">settings.gradle</div>
<div style="position:absolute;left:49.80px;top:461.22px;line-height:11px;white-space:pre;color:#1a1a1a;font-family:'Liberation Sans', 'Noto Sans CJK SC', sans-serif;font-size:9.6px;letter-spacing:0.141px;">External Libraries</div>
<div style="position:absolute;left:309.80px;top:51.30px;line-height:11px;white-space:pre;color:#1a1a1a;font-family:'Liberation Sans', 'Noto Sans CJK SC', sans-serif;font-size:9.6px;letter-spacing:0.203px;">DesktopLauncher.java</div>
<div style="position:absolute;left:450.20px;top:51.30px;line-height:11px;white-space:pre;color:#1a1a1a;font-family:'Liberation Sans', 'Noto Sans CJK SC', sans-serif;font-size:9.6px;letter-spacing:0.094px;">MyGdxGame.java</div>
<div style="position:absolute;left:569.00px;top:51.30px;line-height:11px;white-space:pre;color:#1a1a1a;font-family:'Liberation Sans', 'Noto Sans CJK SC', sans-serif;font-size:9.6px;letter-spacing:0.322px;">settings.gradle (test)</div>
<div style="position:absolute;left:703.50px;top:51.30px;line-height:11px;white-space:pre;color:#1a1a1a;font-family:'Liberation Sans', 'Noto Sans CJK SC', sans-serif;font-size:9.6px;letter-spacing:0.367px;">build.gradle (test)</div>
<div style="position:absolute;left:0.00px;top:71.60px;line-height:11px;white-space:pre;color:#b0b0b0;font-family:'DejaVu Sans Mono', 'Liberation Mono', monospace;font-size:9.9px;width:301.6px;text-align:right;letter-spacing:-0.2px;">1</div>
<div style="position:absolute;left:337.00px;top:70.60px;line-height:12px;white-space:pre;color:#111111;font-family:'DejaVu Sans Mono', 'Liberation Mono', monospace;font-size:10.4px;"><span style="color:#0033b3">package</span> com.mygdx.game;</div>
<div style="position:absolute;left:0.00px;top:88.80px;line-height:11px;white-space:pre;color:#b0b0b0;font-family:'DejaVu Sans Mono', 'Liberation Mono', monospace;font-size:9.9px;width:301.6px;text-align:right;letter-spacing:-0.2px;">2</div>
<div style="position:absolute;left:0.00px;top:106.00px;line-height:11px;white-space:pre;color:#b0b0b0;font-family:'DejaVu Sans Mono', 'Liberation Mono', monospace;font-size:9.9px;width:301.6px;text-align:right;letter-spacing:-0.2px;">3</div>
<div style="position:absolute;left:337.00px;top:105.00px;line-height:12px;white-space:pre;color:#111111;font-family:'DejaVu Sans Mono', 'Liberation Mono', monospace;font-size:10.4px;"><span style="color:#0033b3">import</span> com.badlogic.gdx.backends.lwjgl3.Lwjgl3Application;</div>
<div style="position:absolute;left:0.00px;top:123.20px;line-height:11px;white-space:pre;color:#b0b0b0;font-family:'DejaVu Sans Mono', 'Liberation Mono', monospace;font-size:9.9px;width:301.6px;text-align:right;letter-spacing:-0.2px;">4</div>
<div style="position:absolute;left:337.00px;top:122.20px;line-height:12px;white-space:pre;color:#111111;font-family:'DejaVu Sans Mono', 'Liberation Mono', monospace;font-size:10.4px;"><span style="color:#0033b3">import</span> com.badlogic.gdx.backends.lwjgl3.Lwjgl3ApplicationConfiguration;</div>
<div style="position:absolute;left:0.00px;top:140.40px;line-height:11px;white-space:pre;color:#b0b0b0;font-family:'DejaVu Sans Mono', 'Liberation Mono', monospace;font-size:9.9px;width:301.6px;text-align:right;letter-spacing:-0.2px;">5</div>
<div style="position:absolute;left:337.00px;top:139.40px;line-height:12px;white-space:pre;color:#111111;font-family:'DejaVu Sans Mono', 'Liberation Mono', monospace;font-size:10.4px;"><span style="color:#8c8c8c">import com.mygdx.game.MyGdxGame;</span></div>
<div style="position:absolute;left:0.00px;top:157.60px;line-height:11px;white-space:pre;color:#b0b0b0;font-family:'DejaVu Sans Mono', 'Liberation Mono', monospace;font-size:9.9px;width:301.6px;text-align:right;letter-spacing:-0.2px;">6</div>
<div style="position:absolute;left:0.00px;top:174.80px;line-height:11px;white-space:pre;color:#b0b0b0;font-family:'DejaVu Sans Mono', 'Liberation Mono', monospace;font-size:9.9px;width:301.6px;text-align:right;letter-spacing:-0.2px;">7</div>
<div style="position:absolute;left:337.00px;top:173.80px;line-height:12px;white-space:pre;color:#111111;font-family:'DejaVu Sans Mono', 'Liberation Mono', monospace;font-size:10.4px;"><span style="color:#8c8c8c;font-style:italic">// Please note that on macOS your application needs to be started with the -<span style="text-decoration:underline dotted #7aa77a 1px;text-underline-offset:2px">Xstart</span>OnFirstThread JVM argument</span></div>
<div style="position:absolute;left:0.00px;top:192.00px;line-height:11px;white-space:pre;color:#b0b0b0;font-family:'DejaVu Sans Mono', 'Liberation Mono', monospace;font-size:9.9px;width:301.6px;text-align:right;letter-spacing:-0.2px;">8</div>
<div style="position:absolute;left:337.00px;top:191.00px;line-height:12px;white-space:pre;color:#111111;font-family:'DejaVu Sans Mono', 'Liberation Mono', monospace;font-size:10.4px;"><span style="color:#0033b3">public class</span> DesktopLauncher {</div>
<div style="position:absolute;left:0.00px;top:209.20px;line-height:11px;white-space:pre;color:#b0b0b0;font-family:'DejaVu Sans Mono', 'Liberation Mono', monospace;font-size:9.9px;width:301.6px;text-align:right;letter-spacing:-0.2px;">9</div>
<div style="position:absolute;left:337.00px;top:208.20px;line-height:12px;white-space:pre;color:#111111;font-family:'DejaVu Sans Mono', 'Liberation Mono', monospace;font-size:10.4px;">    <span style="color:#0033b3">public static void</span> <span style="color:#00627a">main</span> (String[] arg) {</div>
<div style="position:absolute;left:0.00px;top:226.40px;line-height:11px;white-space:pre;color:#b0b0b0;font-family:'DejaVu Sans Mono', 'Liberation Mono', monospace;font-size:9.9px;width:301.6px;text-align:right;letter-spacing:-0.2px;">10</div>
<div style="position:absolute;left:337.00px;top:225.40px;line-height:12px;white-space:pre;color:#111111;font-family:'DejaVu Sans Mono', 'Liberation Mono', monospace;font-size:10.4px;">        Lwjgl3ApplicationConfiguration config = <span style="color:#0033b3">new</span> Lwjgl3ApplicationConfiguration();</div>
<div style="position:absolute;left:0.00px;top:243.60px;line-height:11px;white-space:pre;color:#b0b0b0;font-family:'DejaVu Sans Mono', 'Liberation Mono', monospace;font-size:9.9px;width:301.6px;text-align:right;letter-spacing:-0.2px;">11</div>
<div style="position:absolute;left:337.00px;top:242.60px;line-height:12px;white-space:pre;color:#111111;font-family:'DejaVu Sans Mono', 'Liberation Mono', monospace;font-size:10.4px;">        config.setForegroundFPS(<span style="color:#1750eb">60</span>);</div>
<div style="position:absolute;left:0.00px;top:260.80px;line-height:11px;white-space:pre;color:#b0b0b0;font-family:'DejaVu Sans Mono', 'Liberation Mono', monospace;font-size:9.9px;width:301.6px;text-align:right;letter-spacing:-0.2px;">12</div>
<div style="position:absolute;left:337.00px;top:259.80px;line-height:12px;white-space:pre;color:#111111;font-family:'DejaVu Sans Mono', 'Liberation Mono', monospace;font-size:10.4px;">        config.setTitle(<span style="color:#067d17">"My GDX Game"</span>);</div>
<div style="position:absolute;left:0.00px;top:278.00px;line-height:11px;white-space:pre;color:#b0b0b0;font-family:'DejaVu Sans Mono', 'Liberation Mono', monospace;font-size:9.9px;width:301.6px;text-align:right;letter-spacing:-0.2px;">13</div>
<div style="position:absolute;left:337.00px;top:277.00px;line-height:12px;white-space:pre;color:#111111;font-family:'DejaVu Sans Mono', 'Liberation Mono', monospace;font-size:10.4px;">        <span style="color:#0033b3">new</span> Lwjgl3Application(<span style="color:#0033b3">new</span> MyGdxGame(), config);</div>
<div style="position:absolute;left:0.00px;top:295.20px;line-height:11px;white-space:pre;color:#b0b0b0;font-family:'DejaVu Sans Mono', 'Liberation Mono', monospace;font-size:9.9px;width:301.6px;text-align:right;letter-spacing:-0.2px;">14</div>
<div style="position:absolute;left:337.00px;top:294.20px;line-height:12px;white-space:pre;color:#111111;font-family:'DejaVu Sans Mono', 'Liberation Mono', monospace;font-size:10.4px;">    }</div>
<div style="position:absolute;left:0.00px;top:312.40px;line-height:11px;white-space:pre;color:#b0b0b0;font-family:'DejaVu Sans Mono', 'Liberation Mono', monospace;font-size:9.9px;width:301.6px;text-align:right;letter-spacing:-0.2px;">15</div>
<div style="position:absolute;left:337.00px;top:311.40px;line-height:12px;white-space:pre;color:#111111;font-family:'DejaVu Sans Mono', 'Liberation Mono', monospace;font-size:10.4px;">}</div>
<div style="position:absolute;left:0.00px;top:329.60px;line-height:11px;white-space:pre;color:#b0b0b0;font-family:'DejaVu Sans Mono', 'Liberation Mono', monospace;font-size:9.9px;width:301.6px;text-align:right;letter-spacing:-0.2px;">16</div>
<div style="position:absolute;left:1001.40px;top:72.60px;line-height:11px;white-space:pre;color:#6e6e6e;font-family:'Liberation Sans', 'Noto Sans CJK SC', sans-serif;font-size:9.4px;">1</div>
<div style="position:absolute;left:21.00px;top:478.10px;line-height:11px;white-space:pre;color:#1a1a1a;font-family:'Liberation Sans', 'Noto Sans CJK SC', sans-serif;font-size:9.6px;letter-spacing:-0.216px;">Run:</div>
<div style="position:absolute;left:71.90px;top:478.10px;line-height:11px;white-space:pre;color:#3a3a3a;font-family:'Liberation Sans', 'Noto Sans CJK SC', sans-serif;font-size:9.6px;letter-spacing:0.329px;">test:desktop [:desktop:DesktopLauncher.main()]</div>
<div style="position:absolute;left:72.70px;top:497.00px;line-height:11px;white-space:pre;color:#111;font-family:'Liberation Sans', 'Noto Sans CJK SC', sans-serif;font-size:9.6px;font-weight:bold;letter-spacing:0.144px;">test:desktop [:desktop:DesktopLauncher.main()]:</div>
<div style="position:absolute;left:306.40px;top:497.00px;line-height:11px;white-space:pre;color:#1a1a1a;font-family:'Liberation Sans', 'Noto Sans CJK SC', sans-serif;font-size:9.6px;letter-spacing:0.020px;">successful</div>
<div style="position:absolute;left:354.80px;top:497.00px;line-height:11px;white-space:pre;color:#8c8c8c;font-family:'Liberation Sans', 'Noto Sans CJK SC', sans-serif;font-size:9.6px;letter-spacing:0.339px;">At 2023/11/6 1</div>
<div style="position:absolute;left:424.40px;top:499.00px;line-height:9px;white-space:pre;color:#8c8c8c;font-family:'Liberation Sans', 'Noto Sans CJK SC', sans-serif;font-size:8px;letter-spacing:0.232px;">12 sec, 814 ms</div>
<div style="position:absolute;left:493.60px;top:491.40px;line-height:12px;white-space:pre;color:#111;font-family:'DejaVu Sans Mono', 'Liberation Mono', monospace;font-size:10.4px;">&gt; Task :desktop:classes</div>
<div style="position:absolute;left:493.60px;top:508.85px;line-height:12px;white-space:pre;color:#111;font-family:'DejaVu Sans Mono', 'Liberation Mono', monospace;font-size:10.4px;">&gt; Task :desktop:DesktopLauncher.main()</div>
<div style="position:absolute;left:907.40px;top:504.00px;line-height:15px;white-space:pre;color:#a6a6a6;font-family:'Liberation Sans', 'Noto Sans CJK SC', sans-serif;font-size:12.8px;letter-spacing:-0.963px;text-shadow:0 0 1px #fff;">CSDN @村口曹大爷</div>
</body></html>
